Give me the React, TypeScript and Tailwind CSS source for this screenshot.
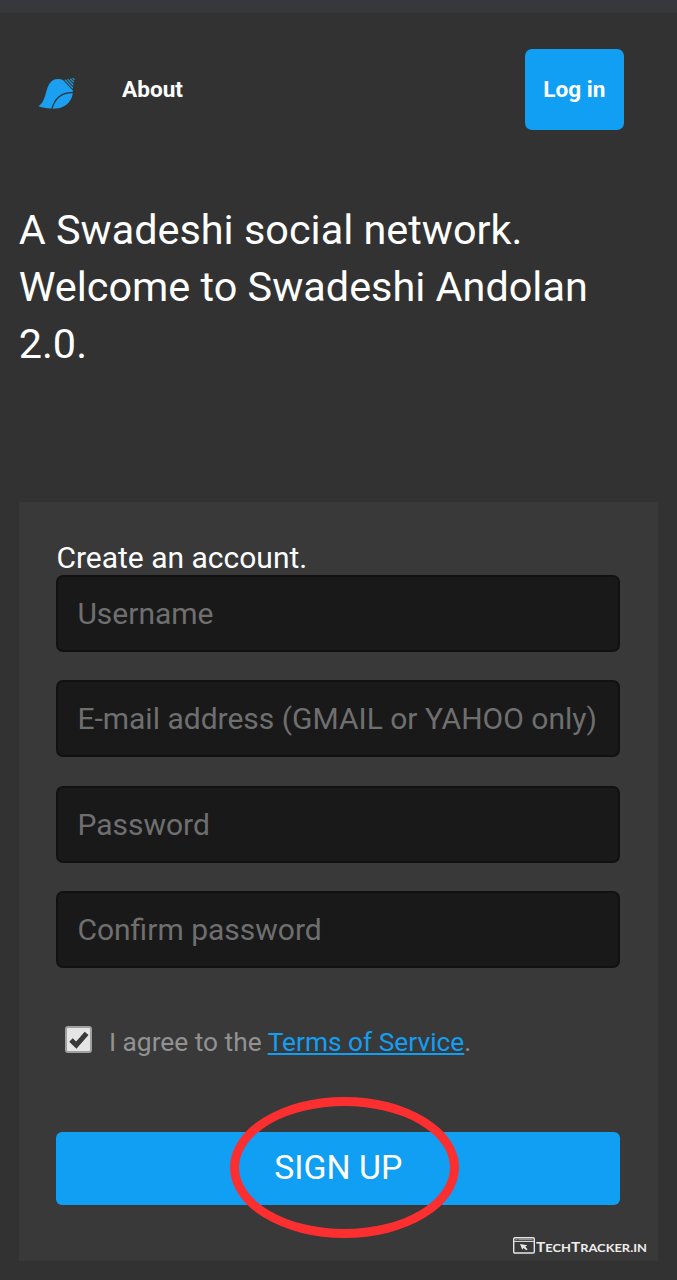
const fields = [
  { label: 'Username', type: 'text' },
  { label: 'E-mail address (GMAIL or YAHOO only)', type: 'email' },
  { label: 'Password', type: 'password' },
  { label: 'Confirm password', type: 'password' },
];

function ShellLogo() {
  return (
    <svg viewBox="0 0 38 32" className="h-[32px] w-[38px]" aria-hidden="true">
      <path
        d="M0.3 29.3C4.5 26.5 6 22.5 7.6 17C9 12 10 8.3 12.3 5.4C15.5 1.6 20.5 1.2 25 3.1L34.8 13.6C35.6 21.7 29.2 31 18 31.6C11 31.8 5.5 31 0.3 29.3Z"
        fill="#1b9ff0"
      />
      <path d="M13.8 31.9C16.5 22.5 22 14.9 35.5 15.6" fill="none" stroke="#27343d" strokeWidth="1.3" />
      <path
        d="M27 2.7L34.9 11.2M29.7 2.2L35.3 8.2M32.3 1.7L35.8 5.4M34.7 1.1L36.5 3"
        fill="none"
        stroke="#2792d4"
        strokeWidth="1.25"
      />
    </svg>
  );
}

function WindowIcon() {
  return (
    <svg viewBox="0 0 22 17" className="h-[17px] w-[22px]" fill="none" aria-hidden="true">
      <rect x="0.7" y="0.8" width="20.6" height="15.2" rx="1.2" stroke="#e6e6e6" strokeWidth="1.4" />
      <path d="M1 4.4H21" stroke="#e6e6e6" strokeWidth="1" />
      <path d="M2.5 2.6H4.5M5.5 2.6H19.5" stroke="#b8b8b8" strokeWidth="0.8" />
      <path d="M7 7L14.3 8.2L12.3 9.7L14.6 12.2L13.2 13.2L10.7 11L9.2 12.6Z" fill="#e6e6e6" />
    </svg>
  );
}

export default function App() {
  return (
    <div className="flex h-[1280px] w-[677px] flex-col overflow-hidden bg-[#323232] font-['Roboto',sans-serif] text-white">
      <div className="h-[13px] shrink-0 bg-[#37383c]" />
      <header className="mt-[36px] flex h-[80.5px] shrink-0 items-center pr-[53px] pl-[38px]">
        <div className="pt-[7px]">
          <ShellLogo />
        </div>
        <a className="ml-[46px] pt-[2px] text-[22.6px] font-bold">About</a>
        <button className="ml-auto h-full w-[99.5px] rounded-[7px] bg-[#119ff3] pt-[2px] text-[22.6px] font-bold">
          Log in
        </button>
      </header>
      <h1 className="mt-[72.3px] h-[172.2px] shrink-0 px-[18.7px] text-[41.4px] leading-[57.3px]">
        A Swadeshi social network.
        <br />
        Welcome to Swadeshi Andolan
        <br />
        2.0.
      </h1>
      <main className="relative mx-[19px] mt-[128px] flex h-[759px] shrink-0 flex-col bg-[#393939] pr-[38px] pl-[37.4px] pt-[38px]">
        <h2 className="h-[35px] shrink-0 text-[30px] leading-[35px]">Create an account.</h2>
        <form className="flex flex-col">
          <div className="flex flex-col gap-[28.3px]">
            {fields.map((field) => (
              <input
                key={field.label}
                type={field.type}
                placeholder={field.label}
                className="h-[77px] w-full rounded-[7px] border-2 border-[#111111] bg-[#191919] px-[19px] text-[30px] outline-none placeholder:text-[#6f6f6f] placeholder:opacity-100"
              />
            ))}
          </div>
          <label className="mt-[58px] flex h-[32px] items-center pl-[9px] text-[26.3px] leading-[32px] text-[#929292]">
            <span className="mb-[4px] flex size-[27px] shrink-0 items-center justify-center rounded-[3px] border-2 border-[#a0a0a0] bg-[#e5e5e5]">
              <svg viewBox="0 0 22 22" className="size-[22px]" fill="none" aria-hidden="true">
                <path d="M3 11L8.3 16.2L18.6 4.4" stroke="#393939" strokeWidth="5" />
              </svg>
            </span>
            <span className="ml-[16.5px] whitespace-nowrap">
              I agree to the <a className="text-[#119ff3] underline">Terms of Service</a>.
            </span>
          </label>
          <button
            type="button"
            className="mt-[74px] h-[73px] w-full rounded-[6px] bg-[#119ff3] text-[33.8px]"
          >
            SIGN UP
          </button>
        </form>
        <div className="absolute top-[595px] left-[211px] h-[141px] w-[229px] rounded-[50%] border-[9px] border-[#fb2e30]" />
        <div className="absolute top-[734px] left-[494px] flex items-center gap-[1px] whitespace-nowrap text-[#eeeeee]">
          <WindowIcon />
          <span className="mt-[3px] origin-left scale-x-[1.17] font-['Lato',sans-serif] text-[13.2px] leading-[17px] font-bold">
            T<span className="text-[11px]">ECH</span>T<span className="text-[11px]">RACKER.IN</span>
          </span>
        </div>
      </main>
    </div>
  );
}
